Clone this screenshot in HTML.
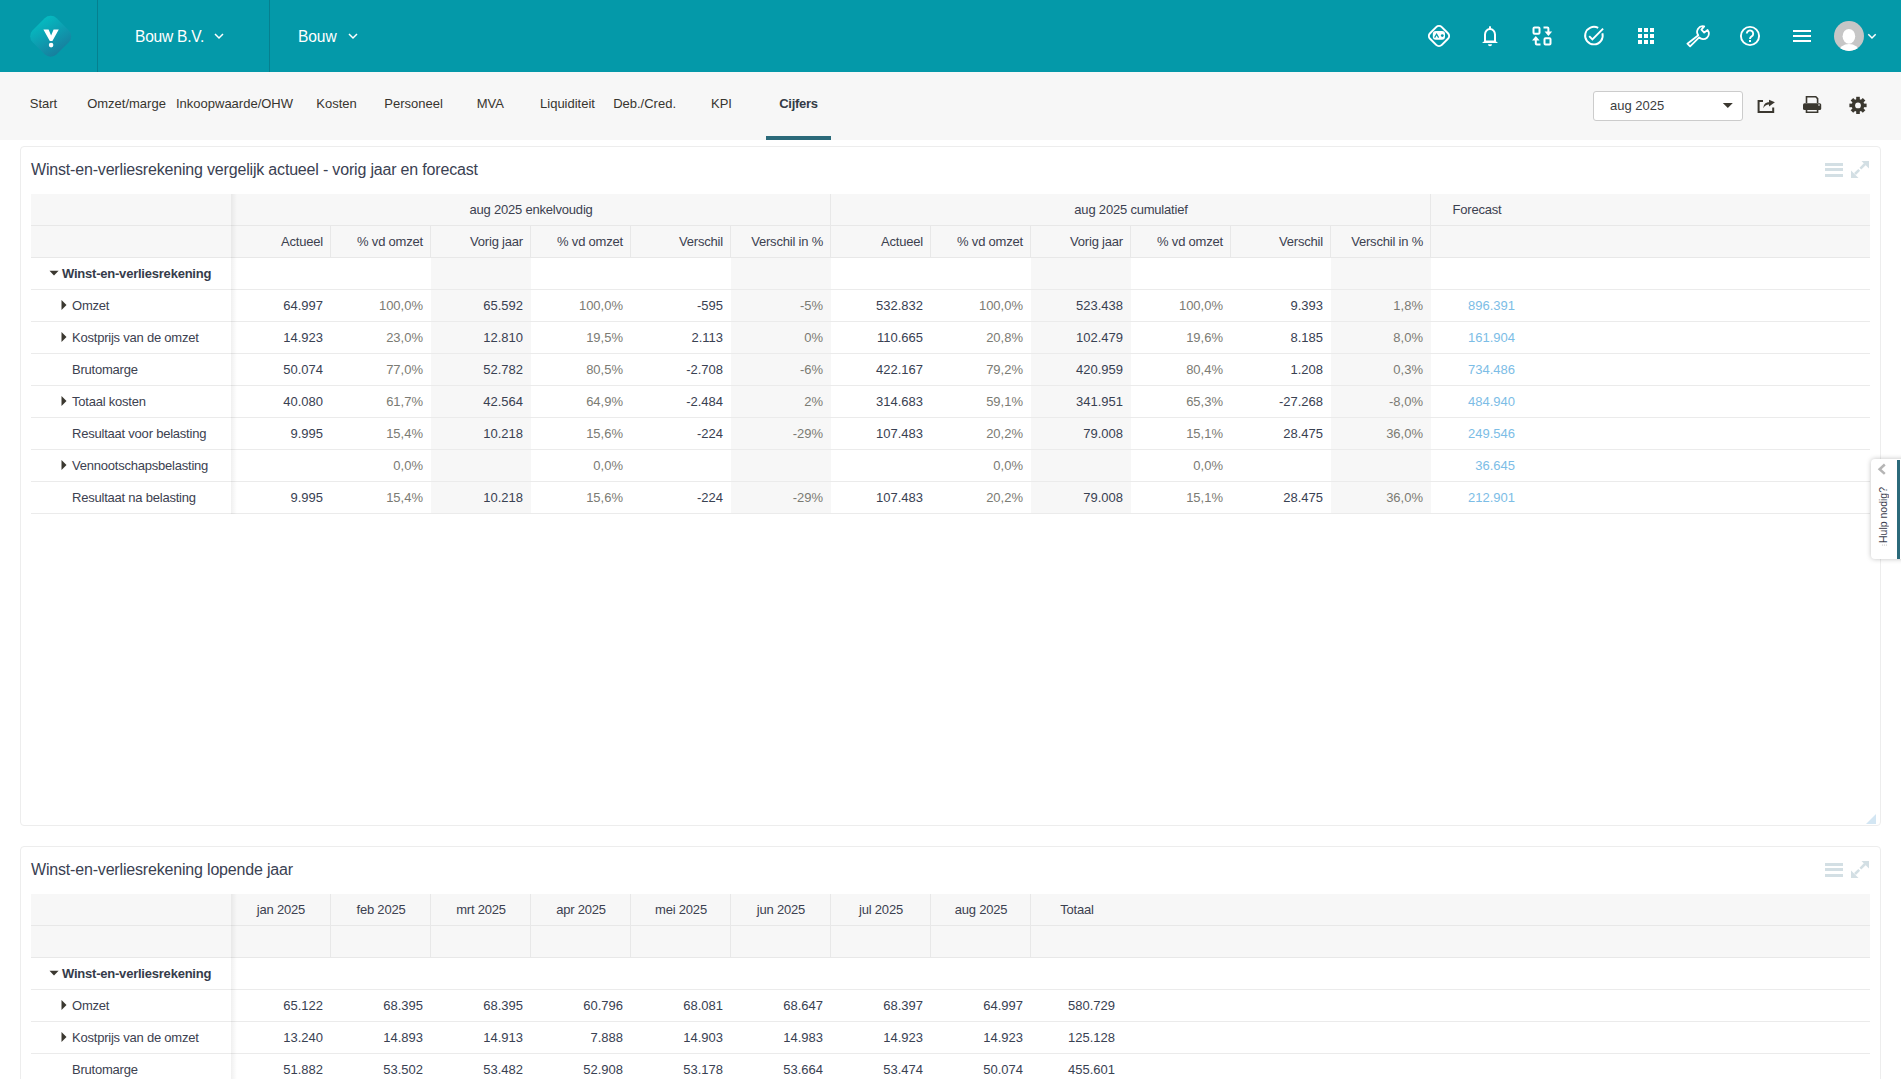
<!DOCTYPE html><html><head><meta charset="utf-8"><title>Cijfers</title><style>
*{box-sizing:border-box;margin:0;padding:0}
html,body{width:1901px;height:1079px;overflow:hidden;background:#fff;font-family:"Liberation Sans",sans-serif;color:#3c4150}
.a{position:absolute}
.t{position:absolute;white-space:nowrap;line-height:1}
#hdr{position:absolute;left:0;top:0;width:1901px;height:72px;background:#0499a9}
#tabs{position:absolute;left:0;top:72px;width:1901px;height:68px;background:#f7f7f7}
.tab{position:absolute;top:96px;font-size:13px;color:#37352f;transform:translateX(-50%);white-space:nowrap;line-height:15px}
.card{position:absolute;border:1px solid #ededed;border-radius:4px;background:#fff}
.ctitle{position:absolute;font-size:16px;letter-spacing:-0.18px;color:#3a4152;white-space:nowrap;line-height:18px}
.hrow{position:absolute;background:#f7f7f7;border-bottom:1px solid #e8e8e8;height:32px}
.brow{position:absolute;border-bottom:1px solid #ebebeb;height:32px}
.gcol{position:absolute;background:#f7f7f7}
.vl{position:absolute;width:1px;background:#e8e8e8}
.c{position:absolute;font-size:13px;line-height:31px;height:31px;white-space:nowrap}
.r{text-align:right}
.n{color:#394152}
.p{color:#7b7b73}
.f{color:#7cbde6}
.h{color:#3c4150;letter-spacing:-0.2px}
.lab{letter-spacing:-0.22px}
.shadow{position:absolute;width:6px;background:linear-gradient(to right,rgba(0,0,0,.06),rgba(0,0,0,0))}
</style></head><body>
<div id="hdr"></div>
<div class="a" style="left:97px;top:0;width:1px;height:72px;background:#06808f"></div>
<div class="a" style="left:269px;top:0;width:1px;height:72px;background:#06808f"></div>
<div class="t" style="left:135px;top:28px;font-size:15.6px;letter-spacing:-0.25px;color:#fff;line-height:18px">Bouw B.V.</div>
<div class="t" style="left:298px;top:28px;font-size:15.6px;letter-spacing:-0.1px;color:#fff;line-height:18px">Bouw</div>
<div id="tabs"></div>
<div class="tab" style="left:43.5px;">Start</div>
<div class="tab" style="left:126.5px;">Omzet/marge</div>
<div class="tab" style="left:234.5px;">Inkoopwaarde/OHW</div>
<div class="tab" style="left:336.6px;">Kosten</div>
<div class="tab" style="left:413.5px;">Personeel</div>
<div class="tab" style="left:490.4px;">MVA</div>
<div class="tab" style="left:567.5px;">Liquiditeit</div>
<div class="tab" style="left:644.6px;">Deb./Cred.</div>
<div class="tab" style="left:721.5px;">KPI</div>
<div class="tab" style="left:798.5px;font-weight:bold;color:#333a46;letter-spacing:-0.25px;">Cijfers</div>
<div class="a" style="left:766px;top:136px;width:65px;height:4px;background:#2b6a7a"></div>
<div class="a" style="left:1593px;top:91px;width:150px;height:30px;border:1px solid #cccccc;border-radius:3px;background:#fff"></div>
<div class="t" style="left:1610px;top:98px;font-size:13px;color:#3b3d40;line-height:15px">aug 2025</div>
<div class="card" style="left:20px;top:146px;width:1861px;height:680px"></div>
<div class="card" style="left:20px;top:846px;width:1861px;height:400px"></div>
<div class="ctitle" style="left:31px;top:161px">Winst-en-verliesrekening vergelijk actueel - vorig jaar en forecast</div>
<div class="ctitle" style="left:31px;top:861px">Winst-en-verliesrekening lopende jaar</div>
<div class="hrow" style="left:31px;top:194px;width:1839px"></div>
<div class="hrow" style="left:31px;top:226px;width:1839px"></div>
<div class="gcol" style="left:431px;top:258px;width:100px;height:256px"></div>
<div class="gcol" style="left:731px;top:258px;width:100px;height:256px"></div>
<div class="gcol" style="left:1031px;top:258px;width:100px;height:256px"></div>
<div class="gcol" style="left:1331px;top:258px;width:100px;height:256px"></div>
<div class="brow" style="left:31px;top:258px;width:1839px"></div>
<div class="brow" style="left:31px;top:290px;width:1839px"></div>
<div class="brow" style="left:31px;top:322px;width:1839px"></div>
<div class="brow" style="left:31px;top:354px;width:1839px"></div>
<div class="brow" style="left:31px;top:386px;width:1839px"></div>
<div class="brow" style="left:31px;top:418px;width:1839px"></div>
<div class="brow" style="left:31px;top:450px;width:1839px"></div>
<div class="brow" style="left:31px;top:482px;width:1839px"></div>
<div class="vl" style="left:830px;top:194px;height:31px"></div>
<div class="vl" style="left:1430px;top:194px;height:31px"></div>
<div class="vl" style="left:330px;top:226px;height:31px"></div>
<div class="vl" style="left:430px;top:226px;height:31px"></div>
<div class="vl" style="left:530px;top:226px;height:31px"></div>
<div class="vl" style="left:630px;top:226px;height:31px"></div>
<div class="vl" style="left:730px;top:226px;height:31px"></div>
<div class="vl" style="left:830px;top:226px;height:31px"></div>
<div class="vl" style="left:930px;top:226px;height:31px"></div>
<div class="vl" style="left:1030px;top:226px;height:31px"></div>
<div class="vl" style="left:1130px;top:226px;height:31px"></div>
<div class="vl" style="left:1230px;top:226px;height:31px"></div>
<div class="vl" style="left:1330px;top:226px;height:31px"></div>
<div class="vl" style="left:1430px;top:226px;height:31px"></div>
<div class="c h" style="left:231px;top:194px;width:600px;text-align:center;">aug 2025 enkelvoudig</div>
<div class="c h" style="left:831px;top:194px;width:600px;text-align:center;">aug 2025 cumulatief</div>
<div class="c h" style="left:1431px;top:194px;width:92px;text-align:center;">Forecast</div>
<div class="c h" style="left:231px;top:226px;width:100px;text-align:right;padding-right:8px;">Actueel</div>
<div class="c h" style="left:331px;top:226px;width:100px;text-align:right;padding-right:8px;">% vd omzet</div>
<div class="c h" style="left:431px;top:226px;width:100px;text-align:right;padding-right:8px;">Vorig jaar</div>
<div class="c h" style="left:531px;top:226px;width:100px;text-align:right;padding-right:8px;">% vd omzet</div>
<div class="c h" style="left:631px;top:226px;width:100px;text-align:right;padding-right:8px;">Verschil</div>
<div class="c h" style="left:731px;top:226px;width:100px;text-align:right;padding-right:8px;">Verschil in %</div>
<div class="c h" style="left:831px;top:226px;width:100px;text-align:right;padding-right:8px;">Actueel</div>
<div class="c h" style="left:931px;top:226px;width:100px;text-align:right;padding-right:8px;">% vd omzet</div>
<div class="c h" style="left:1031px;top:226px;width:100px;text-align:right;padding-right:8px;">Vorig jaar</div>
<div class="c h" style="left:1131px;top:226px;width:100px;text-align:right;padding-right:8px;">% vd omzet</div>
<div class="c h" style="left:1231px;top:226px;width:100px;text-align:right;padding-right:8px;">Verschil</div>
<div class="c h" style="left:1331px;top:226px;width:100px;text-align:right;padding-right:8px;">Verschil in %</div>
<div class="c lab" style="left:62px;top:258px;font-weight:bold;color:#353b4a">Winst-en-verliesrekening</div>
<div class="c lab" style="left:72px;top:290px;color:#3c4150">Omzet</div>
<div class="c n" style="left:231px;top:290px;width:100px;text-align:right;padding-right:8px;">64.997</div>
<div class="c p" style="left:331px;top:290px;width:100px;text-align:right;padding-right:8px;">100,0%</div>
<div class="c n" style="left:431px;top:290px;width:100px;text-align:right;padding-right:8px;">65.592</div>
<div class="c p" style="left:531px;top:290px;width:100px;text-align:right;padding-right:8px;">100,0%</div>
<div class="c n" style="left:631px;top:290px;width:100px;text-align:right;padding-right:8px;">-595</div>
<div class="c p" style="left:731px;top:290px;width:100px;text-align:right;padding-right:8px;">-5%</div>
<div class="c n" style="left:831px;top:290px;width:100px;text-align:right;padding-right:8px;">532.832</div>
<div class="c p" style="left:931px;top:290px;width:100px;text-align:right;padding-right:8px;">100,0%</div>
<div class="c n" style="left:1031px;top:290px;width:100px;text-align:right;padding-right:8px;">523.438</div>
<div class="c p" style="left:1131px;top:290px;width:100px;text-align:right;padding-right:8px;">100,0%</div>
<div class="c n" style="left:1231px;top:290px;width:100px;text-align:right;padding-right:8px;">9.393</div>
<div class="c p" style="left:1331px;top:290px;width:100px;text-align:right;padding-right:8px;">1,8%</div>
<div class="c f" style="left:1431px;top:290px;width:92px;text-align:right;padding-right:8px;">896.391</div>
<div class="c lab" style="left:72px;top:322px;color:#3c4150">Kostprijs van de omzet</div>
<div class="c n" style="left:231px;top:322px;width:100px;text-align:right;padding-right:8px;">14.923</div>
<div class="c p" style="left:331px;top:322px;width:100px;text-align:right;padding-right:8px;">23,0%</div>
<div class="c n" style="left:431px;top:322px;width:100px;text-align:right;padding-right:8px;">12.810</div>
<div class="c p" style="left:531px;top:322px;width:100px;text-align:right;padding-right:8px;">19,5%</div>
<div class="c n" style="left:631px;top:322px;width:100px;text-align:right;padding-right:8px;">2.113</div>
<div class="c p" style="left:731px;top:322px;width:100px;text-align:right;padding-right:8px;">0%</div>
<div class="c n" style="left:831px;top:322px;width:100px;text-align:right;padding-right:8px;">110.665</div>
<div class="c p" style="left:931px;top:322px;width:100px;text-align:right;padding-right:8px;">20,8%</div>
<div class="c n" style="left:1031px;top:322px;width:100px;text-align:right;padding-right:8px;">102.479</div>
<div class="c p" style="left:1131px;top:322px;width:100px;text-align:right;padding-right:8px;">19,6%</div>
<div class="c n" style="left:1231px;top:322px;width:100px;text-align:right;padding-right:8px;">8.185</div>
<div class="c p" style="left:1331px;top:322px;width:100px;text-align:right;padding-right:8px;">8,0%</div>
<div class="c f" style="left:1431px;top:322px;width:92px;text-align:right;padding-right:8px;">161.904</div>
<div class="c lab" style="left:72px;top:354px;color:#3c4150">Brutomarge</div>
<div class="c n" style="left:231px;top:354px;width:100px;text-align:right;padding-right:8px;">50.074</div>
<div class="c p" style="left:331px;top:354px;width:100px;text-align:right;padding-right:8px;">77,0%</div>
<div class="c n" style="left:431px;top:354px;width:100px;text-align:right;padding-right:8px;">52.782</div>
<div class="c p" style="left:531px;top:354px;width:100px;text-align:right;padding-right:8px;">80,5%</div>
<div class="c n" style="left:631px;top:354px;width:100px;text-align:right;padding-right:8px;">-2.708</div>
<div class="c p" style="left:731px;top:354px;width:100px;text-align:right;padding-right:8px;">-6%</div>
<div class="c n" style="left:831px;top:354px;width:100px;text-align:right;padding-right:8px;">422.167</div>
<div class="c p" style="left:931px;top:354px;width:100px;text-align:right;padding-right:8px;">79,2%</div>
<div class="c n" style="left:1031px;top:354px;width:100px;text-align:right;padding-right:8px;">420.959</div>
<div class="c p" style="left:1131px;top:354px;width:100px;text-align:right;padding-right:8px;">80,4%</div>
<div class="c n" style="left:1231px;top:354px;width:100px;text-align:right;padding-right:8px;">1.208</div>
<div class="c p" style="left:1331px;top:354px;width:100px;text-align:right;padding-right:8px;">0,3%</div>
<div class="c f" style="left:1431px;top:354px;width:92px;text-align:right;padding-right:8px;">734.486</div>
<div class="c lab" style="left:72px;top:386px;color:#3c4150">Totaal kosten</div>
<div class="c n" style="left:231px;top:386px;width:100px;text-align:right;padding-right:8px;">40.080</div>
<div class="c p" style="left:331px;top:386px;width:100px;text-align:right;padding-right:8px;">61,7%</div>
<div class="c n" style="left:431px;top:386px;width:100px;text-align:right;padding-right:8px;">42.564</div>
<div class="c p" style="left:531px;top:386px;width:100px;text-align:right;padding-right:8px;">64,9%</div>
<div class="c n" style="left:631px;top:386px;width:100px;text-align:right;padding-right:8px;">-2.484</div>
<div class="c p" style="left:731px;top:386px;width:100px;text-align:right;padding-right:8px;">2%</div>
<div class="c n" style="left:831px;top:386px;width:100px;text-align:right;padding-right:8px;">314.683</div>
<div class="c p" style="left:931px;top:386px;width:100px;text-align:right;padding-right:8px;">59,1%</div>
<div class="c n" style="left:1031px;top:386px;width:100px;text-align:right;padding-right:8px;">341.951</div>
<div class="c p" style="left:1131px;top:386px;width:100px;text-align:right;padding-right:8px;">65,3%</div>
<div class="c n" style="left:1231px;top:386px;width:100px;text-align:right;padding-right:8px;">-27.268</div>
<div class="c p" style="left:1331px;top:386px;width:100px;text-align:right;padding-right:8px;">-8,0%</div>
<div class="c f" style="left:1431px;top:386px;width:92px;text-align:right;padding-right:8px;">484.940</div>
<div class="c lab" style="left:72px;top:418px;color:#3c4150">Resultaat voor belasting</div>
<div class="c n" style="left:231px;top:418px;width:100px;text-align:right;padding-right:8px;">9.995</div>
<div class="c p" style="left:331px;top:418px;width:100px;text-align:right;padding-right:8px;">15,4%</div>
<div class="c n" style="left:431px;top:418px;width:100px;text-align:right;padding-right:8px;">10.218</div>
<div class="c p" style="left:531px;top:418px;width:100px;text-align:right;padding-right:8px;">15,6%</div>
<div class="c n" style="left:631px;top:418px;width:100px;text-align:right;padding-right:8px;">-224</div>
<div class="c p" style="left:731px;top:418px;width:100px;text-align:right;padding-right:8px;">-29%</div>
<div class="c n" style="left:831px;top:418px;width:100px;text-align:right;padding-right:8px;">107.483</div>
<div class="c p" style="left:931px;top:418px;width:100px;text-align:right;padding-right:8px;">20,2%</div>
<div class="c n" style="left:1031px;top:418px;width:100px;text-align:right;padding-right:8px;">79.008</div>
<div class="c p" style="left:1131px;top:418px;width:100px;text-align:right;padding-right:8px;">15,1%</div>
<div class="c n" style="left:1231px;top:418px;width:100px;text-align:right;padding-right:8px;">28.475</div>
<div class="c p" style="left:1331px;top:418px;width:100px;text-align:right;padding-right:8px;">36,0%</div>
<div class="c f" style="left:1431px;top:418px;width:92px;text-align:right;padding-right:8px;">249.546</div>
<div class="c lab" style="left:72px;top:450px;color:#3c4150">Vennootschapsbelasting</div>
<div class="c n" style="left:231px;top:450px;width:100px;text-align:right;padding-right:8px;"></div>
<div class="c p" style="left:331px;top:450px;width:100px;text-align:right;padding-right:8px;">0,0%</div>
<div class="c n" style="left:431px;top:450px;width:100px;text-align:right;padding-right:8px;"></div>
<div class="c p" style="left:531px;top:450px;width:100px;text-align:right;padding-right:8px;">0,0%</div>
<div class="c n" style="left:631px;top:450px;width:100px;text-align:right;padding-right:8px;"></div>
<div class="c p" style="left:731px;top:450px;width:100px;text-align:right;padding-right:8px;"></div>
<div class="c n" style="left:831px;top:450px;width:100px;text-align:right;padding-right:8px;"></div>
<div class="c p" style="left:931px;top:450px;width:100px;text-align:right;padding-right:8px;">0,0%</div>
<div class="c n" style="left:1031px;top:450px;width:100px;text-align:right;padding-right:8px;"></div>
<div class="c p" style="left:1131px;top:450px;width:100px;text-align:right;padding-right:8px;">0,0%</div>
<div class="c n" style="left:1231px;top:450px;width:100px;text-align:right;padding-right:8px;"></div>
<div class="c p" style="left:1331px;top:450px;width:100px;text-align:right;padding-right:8px;"></div>
<div class="c f" style="left:1431px;top:450px;width:92px;text-align:right;padding-right:8px;">36.645</div>
<div class="c lab" style="left:72px;top:482px;color:#3c4150">Resultaat na belasting</div>
<div class="c n" style="left:231px;top:482px;width:100px;text-align:right;padding-right:8px;">9.995</div>
<div class="c p" style="left:331px;top:482px;width:100px;text-align:right;padding-right:8px;">15,4%</div>
<div class="c n" style="left:431px;top:482px;width:100px;text-align:right;padding-right:8px;">10.218</div>
<div class="c p" style="left:531px;top:482px;width:100px;text-align:right;padding-right:8px;">15,6%</div>
<div class="c n" style="left:631px;top:482px;width:100px;text-align:right;padding-right:8px;">-224</div>
<div class="c p" style="left:731px;top:482px;width:100px;text-align:right;padding-right:8px;">-29%</div>
<div class="c n" style="left:831px;top:482px;width:100px;text-align:right;padding-right:8px;">107.483</div>
<div class="c p" style="left:931px;top:482px;width:100px;text-align:right;padding-right:8px;">20,2%</div>
<div class="c n" style="left:1031px;top:482px;width:100px;text-align:right;padding-right:8px;">79.008</div>
<div class="c p" style="left:1131px;top:482px;width:100px;text-align:right;padding-right:8px;">15,1%</div>
<div class="c n" style="left:1231px;top:482px;width:100px;text-align:right;padding-right:8px;">28.475</div>
<div class="c p" style="left:1331px;top:482px;width:100px;text-align:right;padding-right:8px;">36,0%</div>
<div class="c f" style="left:1431px;top:482px;width:92px;text-align:right;padding-right:8px;">212.901</div>
<div class="shadow" style="left:231px;top:194px;height:320px"></div>
<div class="hrow" style="left:31px;top:894px;width:1839px"></div>
<div class="hrow" style="left:31px;top:926px;width:1839px"></div>
<div class="c h" style="left:231px;top:894px;width:100px;text-align:center;">jan 2025</div>
<div class="c h" style="left:331px;top:894px;width:100px;text-align:center;">feb 2025</div>
<div class="c h" style="left:431px;top:894px;width:100px;text-align:center;">mrt 2025</div>
<div class="c h" style="left:531px;top:894px;width:100px;text-align:center;">apr 2025</div>
<div class="c h" style="left:631px;top:894px;width:100px;text-align:center;">mei 2025</div>
<div class="c h" style="left:731px;top:894px;width:100px;text-align:center;">jun 2025</div>
<div class="c h" style="left:831px;top:894px;width:100px;text-align:center;">jul 2025</div>
<div class="c h" style="left:931px;top:894px;width:100px;text-align:center;">aug 2025</div>
<div class="c h" style="left:1031px;top:894px;width:92px;text-align:center;">Totaal</div>
<div class="vl" style="left:330px;top:894px;height:31px"></div>
<div class="vl" style="left:330px;top:926px;height:31px"></div>
<div class="vl" style="left:430px;top:894px;height:31px"></div>
<div class="vl" style="left:430px;top:926px;height:31px"></div>
<div class="vl" style="left:530px;top:894px;height:31px"></div>
<div class="vl" style="left:530px;top:926px;height:31px"></div>
<div class="vl" style="left:630px;top:894px;height:31px"></div>
<div class="vl" style="left:630px;top:926px;height:31px"></div>
<div class="vl" style="left:730px;top:894px;height:31px"></div>
<div class="vl" style="left:730px;top:926px;height:31px"></div>
<div class="vl" style="left:830px;top:894px;height:31px"></div>
<div class="vl" style="left:830px;top:926px;height:31px"></div>
<div class="vl" style="left:930px;top:894px;height:31px"></div>
<div class="vl" style="left:930px;top:926px;height:31px"></div>
<div class="vl" style="left:1030px;top:894px;height:31px"></div>
<div class="vl" style="left:1030px;top:926px;height:31px"></div>
<div class="brow" style="left:31px;top:958px;width:1839px"></div>
<div class="c lab" style="left:62px;top:958px;font-weight:bold;color:#353b4a">Winst-en-verliesrekening</div>
<div class="brow" style="left:31px;top:990px;width:1839px"></div>
<div class="c lab" style="left:72px;top:990px;color:#3c4150">Omzet</div>
<div class="c n" style="left:231px;top:990px;width:100px;text-align:right;padding-right:8px;">65.122</div>
<div class="c n" style="left:331px;top:990px;width:100px;text-align:right;padding-right:8px;">68.395</div>
<div class="c n" style="left:431px;top:990px;width:100px;text-align:right;padding-right:8px;">68.395</div>
<div class="c n" style="left:531px;top:990px;width:100px;text-align:right;padding-right:8px;">60.796</div>
<div class="c n" style="left:631px;top:990px;width:100px;text-align:right;padding-right:8px;">68.081</div>
<div class="c n" style="left:731px;top:990px;width:100px;text-align:right;padding-right:8px;">68.647</div>
<div class="c n" style="left:831px;top:990px;width:100px;text-align:right;padding-right:8px;">68.397</div>
<div class="c n" style="left:931px;top:990px;width:100px;text-align:right;padding-right:8px;">64.997</div>
<div class="c n" style="left:1031px;top:990px;width:92px;text-align:right;padding-right:8px;">580.729</div>
<div class="brow" style="left:31px;top:1022px;width:1839px"></div>
<div class="c lab" style="left:72px;top:1022px;color:#3c4150">Kostprijs van de omzet</div>
<div class="c n" style="left:231px;top:1022px;width:100px;text-align:right;padding-right:8px;">13.240</div>
<div class="c n" style="left:331px;top:1022px;width:100px;text-align:right;padding-right:8px;">14.893</div>
<div class="c n" style="left:431px;top:1022px;width:100px;text-align:right;padding-right:8px;">14.913</div>
<div class="c n" style="left:531px;top:1022px;width:100px;text-align:right;padding-right:8px;">7.888</div>
<div class="c n" style="left:631px;top:1022px;width:100px;text-align:right;padding-right:8px;">14.903</div>
<div class="c n" style="left:731px;top:1022px;width:100px;text-align:right;padding-right:8px;">14.983</div>
<div class="c n" style="left:831px;top:1022px;width:100px;text-align:right;padding-right:8px;">14.923</div>
<div class="c n" style="left:931px;top:1022px;width:100px;text-align:right;padding-right:8px;">14.923</div>
<div class="c n" style="left:1031px;top:1022px;width:92px;text-align:right;padding-right:8px;">125.128</div>
<div class="brow" style="left:31px;top:1054px;width:1839px"></div>
<div class="c lab" style="left:72px;top:1054px;color:#3c4150">Brutomarge</div>
<div class="c n" style="left:231px;top:1054px;width:100px;text-align:right;padding-right:8px;">51.882</div>
<div class="c n" style="left:331px;top:1054px;width:100px;text-align:right;padding-right:8px;">53.502</div>
<div class="c n" style="left:431px;top:1054px;width:100px;text-align:right;padding-right:8px;">53.482</div>
<div class="c n" style="left:531px;top:1054px;width:100px;text-align:right;padding-right:8px;">52.908</div>
<div class="c n" style="left:631px;top:1054px;width:100px;text-align:right;padding-right:8px;">53.178</div>
<div class="c n" style="left:731px;top:1054px;width:100px;text-align:right;padding-right:8px;">53.664</div>
<div class="c n" style="left:831px;top:1054px;width:100px;text-align:right;padding-right:8px;">53.474</div>
<div class="c n" style="left:931px;top:1054px;width:100px;text-align:right;padding-right:8px;">50.074</div>
<div class="c n" style="left:1031px;top:1054px;width:92px;text-align:right;padding-right:8px;">455.601</div>
<div class="shadow" style="left:231px;top:894px;height:192px"></div>
<svg class="a" style="left:0;top:0" width="1901" height="1079" viewBox="0 0 1901 1079"><defs><linearGradient id="lg" gradientUnits="userSpaceOnUse" x1="38" y1="18" x2="62" y2="56"><stop offset="0" stop-color="#03c0c4"/><stop offset="1" stop-color="#19789a"/></linearGradient></defs><path d="M44.69 18.27 A8.5 8.5 0 0 1 56.71 18.27 L68.73 30.29 A8.5 8.5 0 0 1 68.73 42.31 L56.71 54.33 A8.5 8.5 0 0 1 44.69 54.33 L32.67 42.31 A8.5 8.5 0 0 1 32.67 30.29 Z" fill="url(#lg)"/><path d="M43.4 29.4 H48.6 L51.1 35.6 L53.6 29.4 H58.8 L52.4 41 H49.8 Z" fill="#fff"/><circle cx="51.1" cy="45.1" r="2.3" fill="#fff"/><path d="M215 34 L219 38 L223 34" fill="none" stroke="#fff" stroke-width="1.5"/><path d="M349 34 L353 38 L357 34" fill="none" stroke="#fff" stroke-width="1.5"/><rect x="1430.7" y="27.7" width="16.6" height="16.6" rx="4" fill="none" stroke="#fff" stroke-width="2" transform="rotate(45 1439 36)"/><rect x="1432.8" y="31" width="12.2" height="8.8" rx="3" fill="#fff"/><path d="M1434.6 37.6 L1436.6 34.2 L1438.6 37.6" fill="none" stroke="#0499a9" stroke-width="1.2"/><circle cx="1442.3" cy="35.6" r="1.4" fill="#0499a9"/><path d="M1485 41.5 V34.5 A5 5.5 0 0 1 1495 34.5 V41.5" fill="none" stroke="#fff" stroke-width="2"/><path d="M1482 43 L1485 40.5 L1495 40.5 L1498 43 Z" fill="#fff"/><rect x="1489" y="26.3" width="2" height="3" fill="#fff"/><path d="M1488 44.2 H1492 A2 2 0 0 1 1488 44.2 Z" fill="#fff"/><rect x="1533.5" y="27.5" width="6" height="6.2" rx="1" fill="none" stroke="#fff" stroke-width="2"/><rect x="1544.5" y="38.2" width="6" height="6.2" rx="1" fill="none" stroke="#fff" stroke-width="2"/><path d="M1543.5 27.6 H1547.4 Q1548.4 27.6 1548.4 28.6 V32.5" fill="none" stroke="#fff" stroke-width="2"/><path d="M1544.6 31.6 H1552.2 L1548.4 35.9 Z" fill="#fff"/><path d="M1540.5 44.4 H1536.8 Q1535.8 44.4 1535.8 43.4 V39.5" fill="none" stroke="#fff" stroke-width="2"/><path d="M1532 40.4 H1539.6 L1535.8 36.1 Z" fill="#fff"/><path d="M1598.2 27.9 A8.8 8.8 0 1 0 1602.4 33.2" fill="none" stroke="#fff" stroke-width="1.9"/><path d="M1589.2 36.2 L1592.4 39.4 L1603.1 28.6" fill="none" stroke="#fff" stroke-width="1.9"/><rect x="1638" y="28" width="4" height="4" fill="#fff"/><rect x="1638" y="34" width="4" height="4" fill="#fff"/><rect x="1638" y="40" width="4" height="4" fill="#fff"/><rect x="1644" y="28" width="4" height="4" fill="#fff"/><rect x="1644" y="34" width="4" height="4" fill="#fff"/><rect x="1644" y="40" width="4" height="4" fill="#fff"/><rect x="1650" y="28" width="4" height="4" fill="#fff"/><rect x="1650" y="34" width="4" height="4" fill="#fff"/><rect x="1650" y="40" width="4" height="4" fill="#fff"/><path d="M1698.3 35.2 A5.6 5.6 0 0 1 1704.2 26.4 L1701.4 29.6 L1704.2 32.6 L1707.6 30 A5.6 5.6 0 0 1 1699.2 37.4 L1690.1 46.4 L1687.4 43.7 Z" fill="none" stroke="#fff" stroke-width="1.8" stroke-linejoin="round"/><circle cx="1750" cy="36" r="9.1" fill="none" stroke="#fff" stroke-width="1.9"/><path d="M1746.8 33.6 A3.2 3.2 0 1 1 1751.6 36.4 C1750.4 37.1 1750 37.6 1750 39" fill="none" stroke="#fff" stroke-width="1.9"/><rect x="1749" y="40" width="2" height="2" fill="#fff"/><rect x="1793" y="30" width="18" height="2" fill="#fff"/><rect x="1793" y="35" width="18" height="2" fill="#fff"/><rect x="1793" y="40" width="18" height="2" fill="#fff"/><clipPath id="av"><circle cx="1849" cy="36" r="15"/></clipPath><circle cx="1849" cy="36" r="15" fill="#c6c6c6"/><g clip-path="url(#av)"><ellipse cx="1848.9" cy="36.3" rx="6.3" ry="7.4" fill="#fff"/><ellipse cx="1849" cy="52" rx="10" ry="8" fill="#fff"/></g><path d="M1868.3 34.2 L1872 38 L1875.7 34.2" fill="none" stroke="#fff" stroke-width="1.5"/><path d="M1722.8 103 H1732.8 L1727.8 108 Z" fill="#3b3830"/><path d="M1763 101 H1758.6 V112 H1773.2 V107.6" fill="none" stroke="#3b3830" stroke-width="2"/><path d="M1763.4 108.2 C1763.6 104 1765.6 102.3 1769 102.2 V99.8 L1774.9 102.3 L1769 106.6 V104.6 C1766.4 104.6 1764.6 105.8 1763.4 108.2 Z" fill="#3b3830"/><path d="M1806.5 103 V96.8 H1815.8 L1817.6 98.6 V103" fill="none" stroke="#3b3830" stroke-width="1.6"/><rect x="1803" y="103.2" width="18.2" height="6.8" rx="1.5" fill="#3b3830"/><path d="M1806.5 109.5 V112.2 H1817.6 V109.5" fill="none" stroke="#3b3830" stroke-width="1.6"/><circle cx="1819" cy="105" r="0.8" fill="#f7f7f7"/><g fill="#3b3830"><circle cx="1858" cy="105.4" r="6.3"/><rect x="1856.2" y="96.80000000000001" width="3.6" height="4" transform="rotate(0 1858 105.4)"/><rect x="1856.2" y="96.80000000000001" width="3.6" height="4" transform="rotate(45 1858 105.4)"/><rect x="1856.2" y="96.80000000000001" width="3.6" height="4" transform="rotate(90 1858 105.4)"/><rect x="1856.2" y="96.80000000000001" width="3.6" height="4" transform="rotate(135 1858 105.4)"/><rect x="1856.2" y="96.80000000000001" width="3.6" height="4" transform="rotate(180 1858 105.4)"/><rect x="1856.2" y="96.80000000000001" width="3.6" height="4" transform="rotate(225 1858 105.4)"/><rect x="1856.2" y="96.80000000000001" width="3.6" height="4" transform="rotate(270 1858 105.4)"/><rect x="1856.2" y="96.80000000000001" width="3.6" height="4" transform="rotate(315 1858 105.4)"/></g><circle cx="1858" cy="105.4" r="2.9" fill="#f7f7f7"/><rect x="1825" y="163" width="18" height="3" fill="#d3dfe4"/><rect x="1825" y="168" width="18" height="3" fill="#d3dfe4"/><rect x="1825" y="174" width="18" height="3" fill="#d3dfe4"/><path d="M1861.5 161 L1869 161 L1869 168.5 Z" fill="#d3dfe4"/><path d="M1851 170.5 L1851 178 L1858.5 178 Z" fill="#d3dfe4"/><path d="M1855 174 L1859.2 169.8 M1860.4 168.6 L1865 164" stroke="#d3dfe4" stroke-width="2.6"/><rect x="1825" y="863" width="18" height="3" fill="#d3dfe4"/><rect x="1825" y="868" width="18" height="3" fill="#d3dfe4"/><rect x="1825" y="874" width="18" height="3" fill="#d3dfe4"/><path d="M1861.5 861 L1869 861 L1869 868.5 Z" fill="#d3dfe4"/><path d="M1851 870.5 L1851 878 L1858.5 878 Z" fill="#d3dfe4"/><path d="M1855 874 L1859.2 869.8 M1860.4 868.6 L1865 864" stroke="#d3dfe4" stroke-width="2.6"/><path d="M1876 814 V824 H1866 Z" fill="#d3e6f3"/><path d="M49.5 270.8 H58.6 L54 275.5 Z" fill="#3b3830"/><path d="M61.5 300 V310 L66.5 305 Z" fill="#3b3830"/><path d="M61.5 332 V342 L66.5 337 Z" fill="#3b3830"/><path d="M61.5 396 V406 L66.5 401 Z" fill="#3b3830"/><path d="M61.5 460 V470 L66.5 465 Z" fill="#3b3830"/><path d="M49.5 970.8 H58.6 L54 975.5 Z" fill="#3b3830"/><path d="M61.5 1000 V1010 L66.5 1005 Z" fill="#3b3830"/><path d="M61.5 1032 V1042 L66.5 1037 Z" fill="#3b3830"/></svg>
<div class="a" style="left:1871px;top:459px;width:40px;height:100px;background:#fff;border-radius:4px 0 0 4px;box-shadow:0 0 5px rgba(0,0,0,.25)"></div>
<div class="a" style="left:1897px;top:460px;width:3px;height:99px;background:#2b6a7a"></div>
<svg class="a" style="left:1871px;top:459px" width="30" height="100" viewBox="0 0 30 100"><path d="M13.8 5.5 L8.6 10.2 L13.8 14.9" fill="none" stroke="#b5b5b5" stroke-width="2.5"/></svg>
<svg class="a" style="left:1880px;top:543px" width="10" height="4" viewBox="0 0 10 4"><circle cx="2.5" cy="2" r="0.6" fill="#bbb"/><circle cx="4.5" cy="2" r="0.6" fill="#bbb"/><circle cx="6.5" cy="2" r="0.6" fill="#bbb"/></svg>
<div class="t" style="left:1877px;top:489px;width:13px;height:54px;font-size:10.5px;color:#3c4150;writing-mode:vertical-rl;transform:rotate(180deg);line-height:13px">Hulp nodig?</div>
</body></html>
